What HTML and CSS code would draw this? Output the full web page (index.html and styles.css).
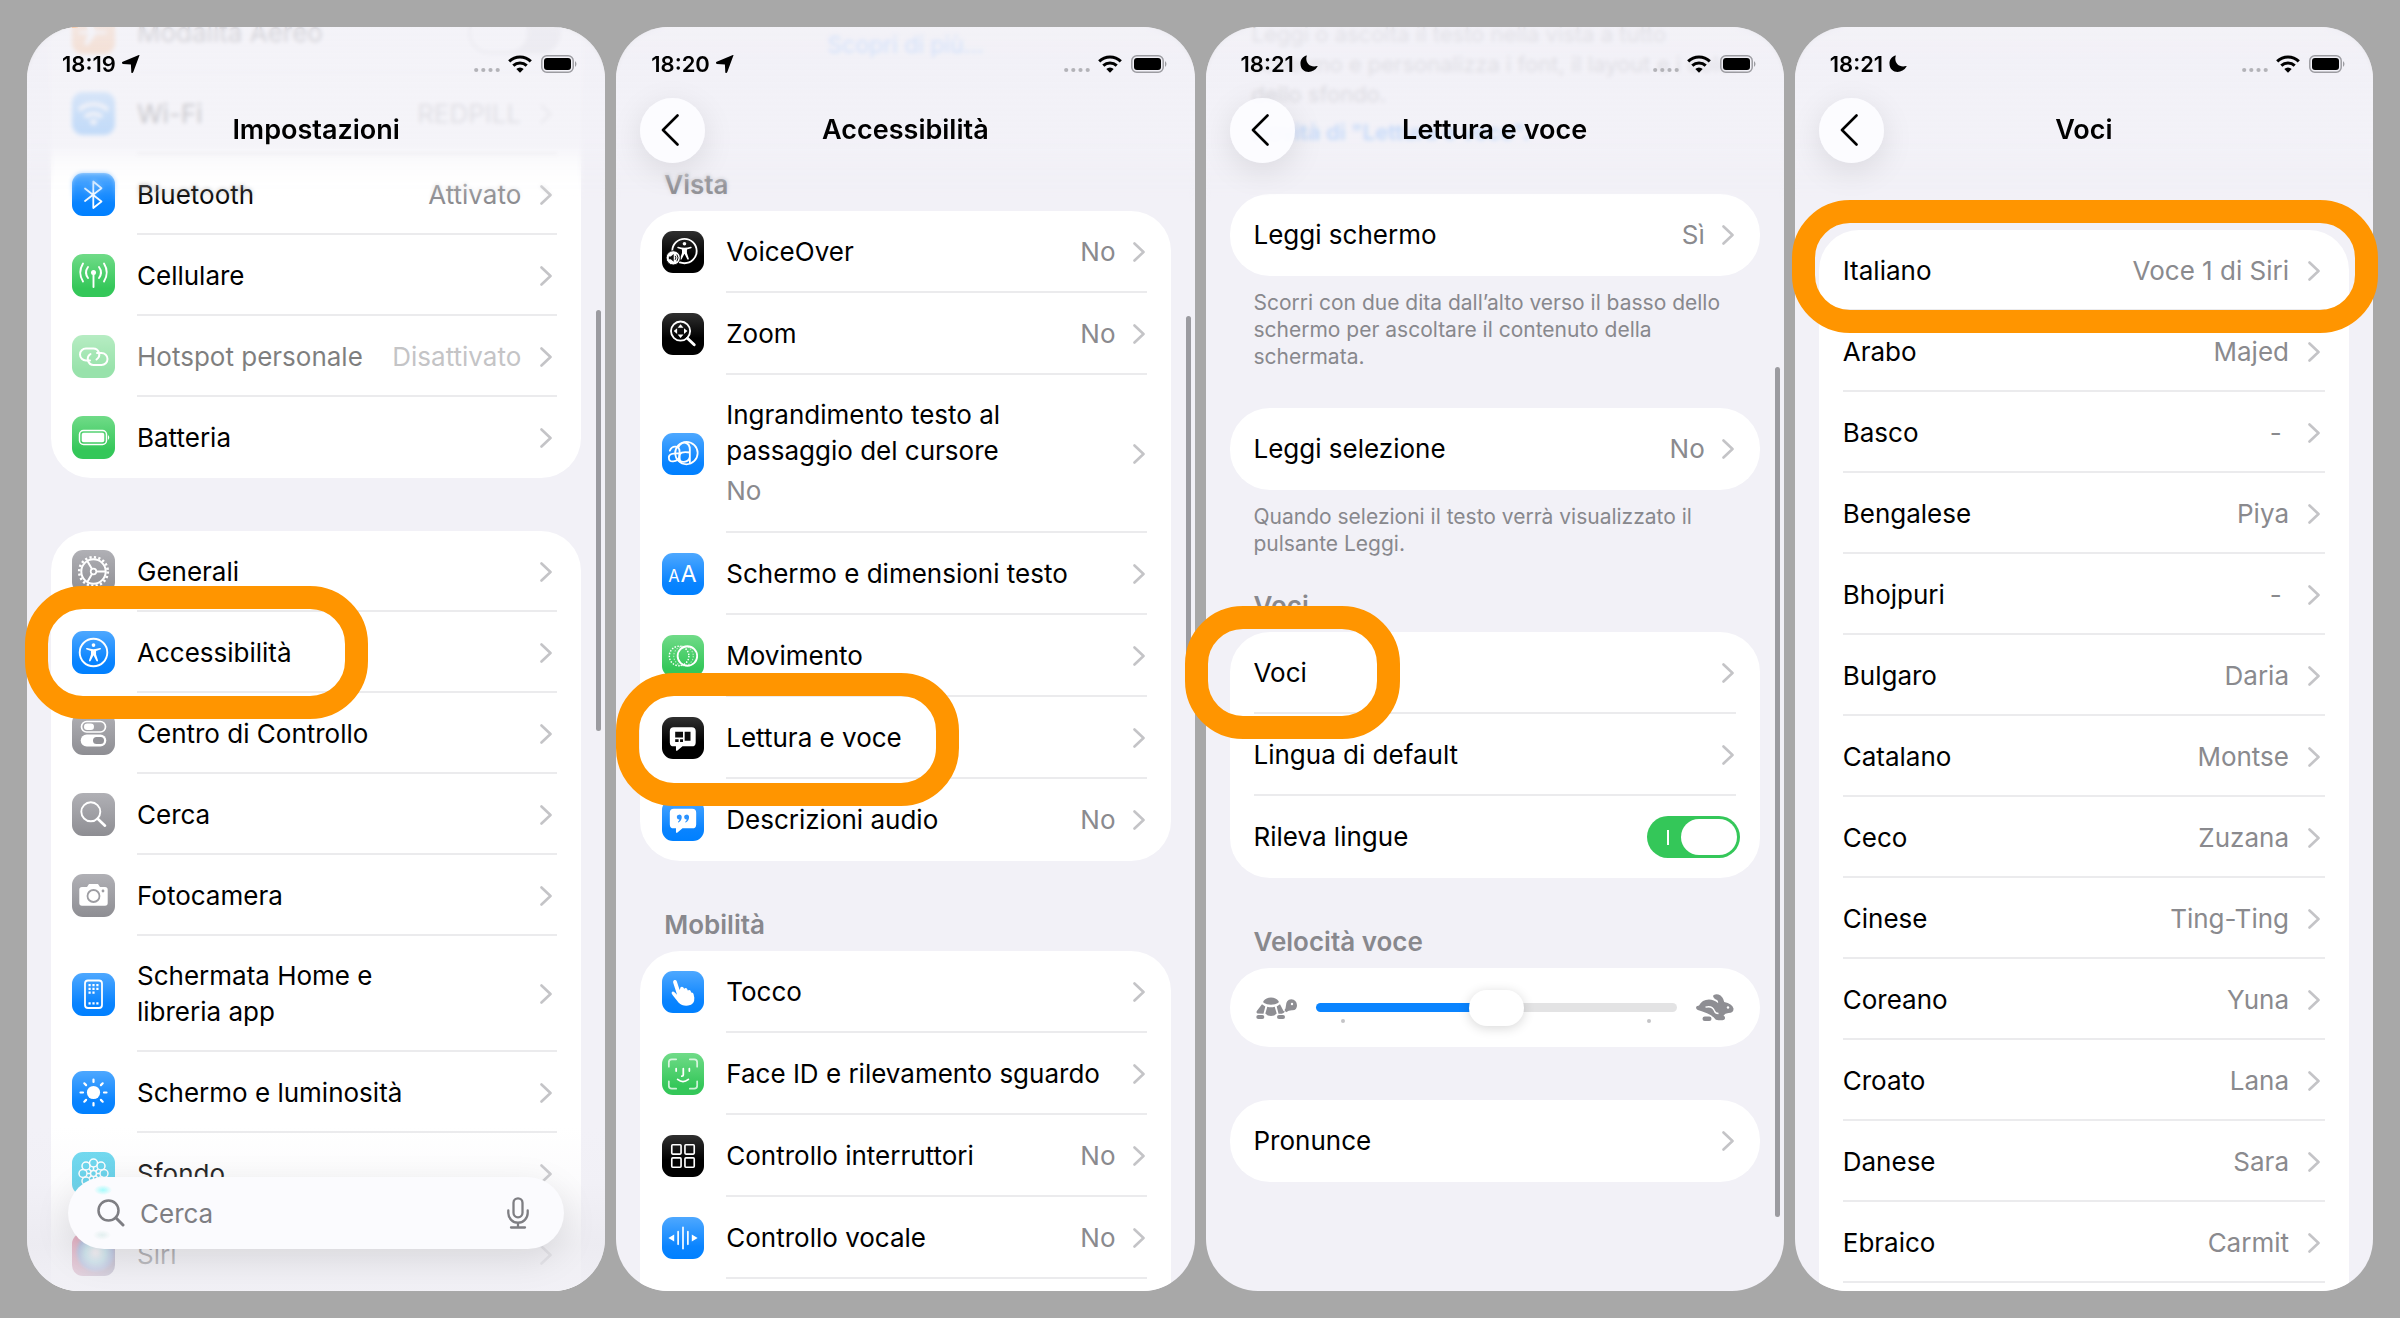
FILE: index.html
```html
<!DOCTYPE html>
<html lang="it">
<head>
    <meta charset="UTF-8">
    <meta name="viewport" content="width=device-width, initial-scale=1.0">
    <title>Impostazioni - Voci</title>
    <link rel="stylesheet" href="styles.css">
</head>
<body>
    <!-- Shared symbols -->
    <svg class="sprite" aria-hidden="true">
        <symbol id="chevron" viewBox="0 0 12 20"><path d="M1.5 1.5 10.5 10 1.5 18.5" fill="none" stroke="currentColor" stroke-width="2.6" stroke-linecap="round" stroke-linejoin="round"/></symbol>
        <symbol id="back" viewBox="0 0 18 32"><path d="M16.5 1.5 2 16 16.5 30.5" fill="none" stroke="currentColor" stroke-width="2.6" stroke-linecap="round" stroke-linejoin="round"/></symbol>
        <symbol id="location" viewBox="0 0 18 18"><path d="M17.5.3 11.300 17q-1.300 2.300-2 .2L8.900 9.600.9 8.900Q-1 8 .7 6.800L16.900.1q.9-.2.600.2z" fill="currentColor"/></symbol>
        <symbol id="moon" viewBox="0 0 19 19"><path d="M6.600.6q.8-.5.5.4C5 8 10.500 13.700 18 11.600q.9-.2.5.6C13.500 21 .5 19.500.5 9 .5 5 3 2 6.600.6z" fill="currentColor"/></symbol>
        <symbol id="dots" viewBox="0 0 26 18"><g fill="#b3b3b8"><circle cx="2.200" cy="15" r="2.100"/><circle cx="9.300" cy="15" r="2.100"/><circle cx="16.500" cy="15" r="2.100"/><circle cx="23.700" cy="15" r="2.100"/></g></symbol>
        <symbol id="wifi" viewBox="0 0 24 18"><g fill="none" stroke="currentColor" stroke-width="3"><path d="M1.200 6.400a15.500 15.500 0 0 1 21.600 0"/><path d="M5.300 10.600a9.700 9.700 0 0 1 13.400 0"/></g><path d="M12 17.800 8.300 14a5.300 5.300 0 0 1 7.400 0z" fill="currentColor"/></symbol>
        <symbol id="battery" viewBox="0 0 36 18"><rect x=".8" y=".8" width="31.400" height="16.400" rx="5" fill="none" stroke="#9c9ca1" stroke-width="1.500"/><rect x="3" y="3" width="27" height="12" rx="3" fill="currentColor"/><path d="M34 6q3 3 0 6z" fill="#9c9ca1"/></symbol>
        <symbol id="search" viewBox="0 0 28 28"><circle cx="11.500" cy="11.500" r="10" fill="none" stroke="currentColor" stroke-width="2.500"/><path d="M18.800 18.800 26 26" stroke="currentColor" stroke-width="3" stroke-linecap="round"/></symbol>
        <symbol id="mic" viewBox="0 0 22 32"><g fill="none" stroke="currentColor" stroke-width="2.300" stroke-linecap="round"><rect x="6.500" y="1.300" width="9" height="19" rx="4.500"/><path d="M1.300 13.500V16a9.700 9.700 0 0 0 19.400 0v-2.500M11 25.800V30M4 30.500h14"/></g></symbol>
        <symbol id="person" viewBox="0 0 20 24"><circle cx="10" cy="2.700" r="2.300"/><path d="M2 6.400q4 1.400 8 1.400t8-1.400q1.500-.2 1.300 1-.1.600-.8.900l-5.300 1.700v4.500l2.400 7.200q.2 1.300-.8 1.500-.9.100-1.300-.9L10 15.400l-3.500 6.900q-.4 1-1.300.9-1-.2-.8-1.500l2.400-7.200V10L1.500 8.300q-.7-.3-.8-.9-.2-1.200 1.300-1z"/></symbol>
    </svg>

    <main class="board">
        <!-- Impostazioni -->
        <section class="phone">
            <div class="screen">
                <header class="top-bar">
                    <div class="status">
                        <span class="time">18:19</span>
                        <svg class="status-mark"><use href="#location"/></svg>
                        <svg class="status-dots"><use href="#dots"/></svg>
                        <svg class="status-wifi"><use href="#wifi"/></svg>
                        <svg class="status-battery"><use href="#battery"/></svg>
                    </div>
                    <div class="nav"><h1>Impostazioni</h1></div>
                </header>

                <div class="content content-settings">
                    <ul class="card">
                        <li>
                            <label class="row row-switch">
                                <span class="icon orange"><svg viewBox="0 0 43 43"><path d="M7 20h9L12 9h4l8 11h9q4 1.500 0 3h-9l-8 11h-4l4-11H7z" fill="#fff"/></svg></span>
                                <span class="row-body"><span class="label">Modalità Aereo</span><input class="switch" type="checkbox" role="switch"></span>
                            </label>
                        </li>
                        <li>
                            <a class="row" href="#">
                                <span class="icon blue"><svg viewBox="0 0 43 43"><g fill="none" stroke="#fff" stroke-width="4"><path d="M7 18a21 21 0 0 1 29 0M13 25a12.500 12.500 0 0 1 17 0"/></g><path d="m21.500 34-4.500-5q4.500-3.500 9 0z" fill="#fff"/></svg></span>
                                <span class="row-body"><span class="label">Wi-Fi</span><span class="value">REDPILL</span><svg class="chevron"><use href="#chevron"/></svg></span>
                            </a>
                        </li>
                        <li>
                            <a class="row" href="#">
                                <span class="icon blue"><svg viewBox="0 0 43 43"><path d="M13 15.500 29.500 28.500 21.300 35V8.500l8.200 6.800L13 28" fill="none" stroke="#fff" stroke-width="1.800" stroke-linejoin="round" stroke-linecap="round"/></svg></span>
                                <span class="row-body"><span class="label">Bluetooth</span><span class="value">Attivato</span><svg class="chevron"><use href="#chevron"/></svg></span>
                            </a>
                        </li>
                        <li>
                            <a class="row" href="#">
                                <span class="icon green"><svg viewBox="0 0 43 43"><g fill="none" stroke="#fff" stroke-width="1.900" stroke-linecap="round"><path d="M11 9.500q-5.500 9 0 18M32 9.500q5.500 9 0 18M16 13q-4 5.500 0 11M27 13q4 5.500 0 11M21.500 18.500V33"/></g><circle cx="21.500" cy="18.500" r="2.500" fill="#fff"/></svg></span>
                                <span class="row-body"><span class="label">Cellulare</span><svg class="chevron"><use href="#chevron"/></svg></span>
                            </a>
                        </li>
                        <li>
                            <a class="row row-disabled" href="#">
                                <span class="icon green"><svg viewBox="0 0 43 43"><g fill="none" stroke="#fff" stroke-width="2" stroke-linecap="round"><path d="M18 25.500h-4a6 6 0 0 1 0-12h7a6 6 0 0 1 3.500 11"/><path d="M25 18h4.500a6 6 0 0 1 0 12H22a6 6 0 0 1-3.500-11"/></g></svg></span>
                                <span class="row-body"><span class="label">Hotspot personale</span><span class="value">Disattivato</span><svg class="chevron"><use href="#chevron"/></svg></span>
                            </a>
                        </li>
                        <li>
                            <a class="row" href="#">
                                <span class="icon green"><svg viewBox="0 0 43 43"><rect x="7.500" y="14.500" width="27" height="14" rx="4" fill="none" stroke="#fff" stroke-width="1.500"/><rect x="9.700" y="16.700" width="22.600" height="9.600" rx="2" fill="#fff"/><path d="M36 19q2.500 2.500 0 5z" fill="#fff"/></svg></span>
                                <span class="row-body"><span class="label">Batteria</span><svg class="chevron"><use href="#chevron"/></svg></span>
                            </a>
                        </li>
                    </ul>

                    <ul class="card card-cut">
                        <li>
                            <a class="row" href="#">
                                <span class="icon grey"><svg viewBox="0 0 43 43"><g fill="none" stroke="#fff"><circle cx="21.500" cy="21.500" r="14.300" stroke-width="2.600" stroke-dasharray="2.200 2.290"/><circle cx="21.500" cy="21.500" r="12.200" stroke-width="2"/><circle cx="21.500" cy="21.500" r="2.800" stroke-width="1.700"/><path d="M24.300 21.500h9.500M20 19 15.300 11M20 24l-4.700 8" stroke-width="2"/></g></svg></span>
                                <span class="row-body"><span class="label">Generali</span><svg class="chevron"><use href="#chevron"/></svg></span>
                            </a>
                        </li>
                        <li>
                            <a class="row" href="#">
                                <span class="icon blue"><svg viewBox="0 0 43 43"><circle cx="21.500" cy="21.500" r="13.800" fill="none" stroke="#fff" stroke-width="1.900"/><svg x="13.500" y="11.500" width="16" height="20" fill="#fff"><use href="#person"/></svg></svg></span>
                                <span class="row-body"><span class="label">Accessibilità</span><svg class="chevron"><use href="#chevron"/></svg></span>
                            </a>
                        </li>
                        <li>
                            <a class="row" href="#">
                                <span class="icon grey"><svg viewBox="0 0 43 43"><rect x="9.500" y="9.500" width="24" height="10.500" rx="5.200" fill="none" stroke="#fff" stroke-width="1.700"/><rect x="12" y="11.500" width="10" height="6.500" rx="3.200" fill="#fff"/><rect x="8.700" y="22.500" width="25.600" height="12" rx="6" fill="#fff"/><rect x="21" y="25" width="11" height="7" rx="3.500" fill="#929297"/></svg></span>
                                <span class="row-body"><span class="label">Centro di Controllo</span><svg class="chevron"><use href="#chevron"/></svg></span>
                            </a>
                        </li>
                        <li>
                            <a class="row" href="#">
                                <span class="icon grey"><svg viewBox="0 0 43 43"><circle cx="18.800" cy="18.800" r="9.500" fill="none" stroke="#fff" stroke-width="1.900"/><path d="m25.700 25.700 7.300 7" stroke="#fff" stroke-width="2.600" stroke-linecap="round"/></svg></span>
                                <span class="row-body"><span class="label">Cerca</span><svg class="chevron"><use href="#chevron"/></svg></span>
                            </a>
                        </li>
                        <li>
                            <a class="row" href="#">
                                <span class="icon grey"><svg viewBox="0 0 43 43"><path d="M10 13h5l2-3h9l2 3h5q2.700 0 2.700 2.700V29q0 2.700-2.700 2.700H10Q7.300 31.700 7.300 29V15.700Q7.300 13 10 13z" fill="#fff"/><circle cx="21.500" cy="22" r="6" fill="none" stroke="#9d9da2" stroke-width="1.800"/><circle cx="31" cy="17" r="1.400" fill="#9d9da2"/></svg></span>
                                <span class="row-body"><span class="label">Fotocamera</span><svg class="chevron"><use href="#chevron"/></svg></span>
                            </a>
                        </li>
                        <li>
                            <a class="row" href="#">
                                <span class="icon blue"><svg viewBox="0 0 43 43"><rect x="13" y="7.500" width="17" height="27.500" rx="3" fill="none" stroke="#fff" stroke-width="1.800"/><g fill="#fff"><path d="M16.500 11h2.200v2.200h-2.200zM20.400 11h2.200v2.200h-2.200zM24.300 11h2.200v2.200h-2.200zM16.500 14.800h2.200V17h-2.200zM20.400 14.800h2.200V17h-2.200zM24.300 14.800h2.200V17h-2.200zM16.500 18.600h2.200v2.200h-2.200zM20.400 18.600h2.200v2.200h-2.200zM16.500 29.300h2.200v2.200h-2.200zM20.400 29.300h2.200v2.200h-2.200zM24.300 29.300h2.200v2.200h-2.200z"/></g></svg></span>
                                <span class="row-body"><span class="label label-narrow">Schermata Home e libreria app</span><svg class="chevron"><use href="#chevron"/></svg></span>
                            </a>
                        </li>
                        <li>
                            <a class="row" href="#">
                                <span class="icon blue"><svg viewBox="0 0 43 43"><circle cx="21.500" cy="21.500" r="6.600" fill="#fff"/><path d="M21.500 8.500V11M21.500 32v2.500M8.500 21.500H11M32 21.500h2.500M12.300 12.300l1.800 1.800M28.900 28.900l1.800 1.800M12.300 30.700l1.800-1.800M28.900 14.100l1.800-1.800" stroke="#fff" stroke-width="2.200" stroke-linecap="round"/></svg></span>
                                <span class="row-body"><span class="label">Schermo e luminosità</span><svg class="chevron"><use href="#chevron"/></svg></span>
                            </a>
                        </li>
                        <li>
                            <a class="row" href="#">
                                <span class="icon cyan"><svg viewBox="0 0 43 43"><g fill="none" stroke="#fff" stroke-width="1.500"><circle cx="21.500" cy="11" r="4"/><circle cx="29" cy="14" r="4"/><circle cx="32" cy="21.500" r="4"/><circle cx="29" cy="29" r="4"/><circle cx="21.500" cy="32" r="4"/><circle cx="14" cy="29" r="4"/><circle cx="11" cy="21.500" r="4"/><circle cx="14" cy="14" r="4"/><circle cx="21.500" cy="21.500" r="3"/><path d="M21.500 15v3.500M21.500 24.500V28M15 21.500h3.500M24.500 21.500H28M17 17l2.400 2.400M23.600 23.600 26 26M17 26l2.400-2.400M23.600 19.400 26 17"/></g></svg></span>
                                <span class="row-body"><span class="label">Sfondo</span><svg class="chevron"><use href="#chevron"/></svg></span>
                            </a>
                        </li>
                        <li>
                            <a class="row" href="#">
                                <span class="icon siri"></span>
                                <span class="row-body"><span class="label">Siri</span><svg class="chevron"><use href="#chevron"/></svg></span>
                            </a>
                        </li>
                    </ul>
                </div>

                <span class="scrollbar scrollbar-settings"></span>
                <form class="search-area">
                    <label class="search">
                        <svg class="search-icon"><use href="#search"/></svg>
                        <input type="search" placeholder="Cerca" aria-label="Cerca">
                        <svg class="mic-icon"><use href="#mic"/></svg>
                    </label>
                </form>
            </div>
            <span class="ring ring-settings"></span>
        </section>

        <!-- Accessibilità -->
        <section class="phone">
            <div class="screen">
                <header class="top-bar">
                    <div class="status">
                        <span class="time">18:20</span>
                        <svg class="status-mark"><use href="#location"/></svg>
                        <svg class="status-dots"><use href="#dots"/></svg>
                        <svg class="status-wifi"><use href="#wifi"/></svg>
                        <svg class="status-battery"><use href="#battery"/></svg>
                    </div>
                    <div class="nav">
                        <button class="back" aria-label="Indietro"><svg><use href="#back"/></svg></button>
                        <h1>Accessibilità</h1>
                    </div>
                </header>

                <div class="content content-access">
                    <a class="more" href="#">Scopri di più...</a>
                    <h2>Vista</h2>
                    <ul class="card">
                        <li>
                            <a class="row" href="#">
                                <span class="icon black"><svg viewBox="0 0 43 43"><circle cx="23" cy="20.500" r="12.500" fill="none" stroke="#fff" stroke-width="1.900"/><svg x="15" y="11" width="16" height="19" fill="#fff"><use href="#person"/></svg><circle cx="11.500" cy="27.500" r="7.300" fill="#fff" stroke="#111" stroke-width="1"/><path d="M7 26v3h2l3 2.500v-8L9 26z" fill="#111"/><path d="M13.500 25.500q1.500 2 0 4M15.200 24q2.500 3.500 0 7" fill="none" stroke="#111"/></svg></span>
                                <span class="row-body"><span class="label">VoiceOver</span><span class="value">No</span><svg class="chevron"><use href="#chevron"/></svg></span>
                            </a>
                        </li>
                        <li>
                            <a class="row" href="#">
                                <span class="icon black"><svg viewBox="0 0 43 43"><circle cx="19" cy="18.500" r="9.800" fill="none" stroke="#fff" stroke-width="1.900"/><path d="m26 25.800 7 6.700" stroke="#fff" stroke-width="3" stroke-linecap="round"/><path d="m19 11.500 3 3.500h-6zM19 25.500l-3-3.500h6zM12 18.500l3.500-3v6zM26 18.500l-3.500 3v-6z" fill="#fff"/></svg></span>
                                <span class="row-body"><span class="label">Zoom</span><span class="value">No</span><svg class="chevron"><use href="#chevron"/></svg></span>
                            </a>
                        </li>
                        <li>
                            <a class="row" href="#">
                                <span class="icon blue"><svg viewBox="0 0 43 43"><circle cx="25" cy="20.500" r="11.500" fill="none" stroke="#fff" stroke-width="1.800"/><g fill="none" stroke="#fff" stroke-width="1.900" stroke-linecap="round"><path d="M8 18q2-4.500 6-4 4 .5 4 5v10M18 21q-11-1-11 4 0 4.500 4.500 4 5-.5 6.500-4.500"/><path d="M17 14q3-5 7-4 4.500 1 4.500 7v13M28.500 20q-11-2-11 4.500 0 5.500 5 5 5-.5 6-5"/></g></svg></span>
                                <span class="row-body"><span class="label label-narrow">Ingrandimento testo al passaggio del cursore <span class="sub">No</span></span><svg class="chevron"><use href="#chevron"/></svg></span>
                            </a>
                        </li>
                        <li>
                            <a class="row" href="#">
                                <span class="icon blue"><svg viewBox="0 0 43 43"><text x="6.500" y="30" font-size="17" fill="#fff">A</text><text x="19" y="30" font-size="24" fill="#fff">A</text></svg></span>
                                <span class="row-body"><span class="label">Schermo e dimensioni testo</span><svg class="chevron"><use href="#chevron"/></svg></span>
                            </a>
                        </li>
                        <li>
                            <a class="row" href="#">
                                <span class="icon green"><svg viewBox="0 0 43 43"><g fill="none" stroke="#fff"><circle cx="17.500" cy="21.500" r="10" stroke-width="1.500" stroke-dasharray="1.500 1.500"/><circle cx="22" cy="21.500" r="10" stroke-width="1.200" stroke-dasharray="1.500 1.500" opacity=".6"/><circle cx="26" cy="21.500" r="10" stroke-width="1.900"/></g></svg></span>
                                <span class="row-body"><span class="label">Movimento</span><svg class="chevron"><use href="#chevron"/></svg></span>
                            </a>
                        </li>
                        <li>
                            <a class="row" href="#">
                                <span class="icon black"><svg viewBox="0 0 43 43"><path d="M12 10.500h18.500q4 0 4 4V26q0 4-4 4H21l-5.500 4.500q-1.200.6-1.200-.8V30H12q-4 0-4-4V14.500q0-4 4-4z" fill="#fff"/><path d="M13.500 15h8v6h-8zM13.500 22.700h3.500v3h-3.500zM18.500 22.700h3v3h-3zM23.200 15h6v9.200h-6z" fill="#0c0c0c"/></svg></span>
                                <span class="row-body"><span class="label">Lettura e voce</span><svg class="chevron"><use href="#chevron"/></svg></span>
                            </a>
                        </li>
                        <li>
                            <a class="row" href="#">
                                <span class="icon blue"><svg viewBox="0 0 43 43"><path d="M12 10h19q4 0 4 4v12q0 4-4 4H21l-5.500 4.500q-1.200.6-1.200-.8V30H12q-4 0-4-4V14q0-4 4-4z" fill="#fff"/><g fill="#2b93ff"><path d="M17.500 16a2.500 2.500 0 0 1 2.700 2.800q0 3.500-3.400 5.200-.8 0-.5-.8 1.300-1 1.600-2.200a2.500 2.500 0 0 1-.4-5zM25 16a2.500 2.500 0 0 1 2.700 2.800q0 3.500-3.400 5.200-.8 0-.5-.8 1.300-1 1.600-2.200a2.500 2.500 0 0 1-.4-5z"/></g></svg></span>
                                <span class="row-body"><span class="label">Descrizioni audio</span><span class="value">No</span><svg class="chevron"><use href="#chevron"/></svg></span>
                            </a>
                        </li>
                    </ul>

                    <h2>Mobilità</h2>
                    <ul class="card card-cut">
                        <li>
                            <a class="row" href="#">
                                <span class="icon blue"><svg viewBox="0 0 43 43"><path d="M12.600 9.300q1.800-.6 2.500 1.200l3 9 .9-2.800q1.500-1.500 2.900.3l.8 1.200q1.900-1.800 3.200.4l.5 1.300q2-1.300 3 .6l.4 1.500q2-.5 2.500 1.500l.8 3.800q.5 7-6.300 8.100-6 .8-9.700-3l-6.300-7.800q-1.600-2.300-.7-3.200 1.300-1.200 3 .6l2.300 2.300-4-12.500q-.4-1.900 1.200-2.500z" fill="#fff"/></svg></span>
                                <span class="row-body"><span class="label">Tocco</span><svg class="chevron"><use href="#chevron"/></svg></span>
                            </a>
                        </li>
                        <li>
                            <a class="row" href="#">
                                <span class="icon green"><svg viewBox="0 0 43 43"><g fill="none" stroke="#fff" stroke-width="1.800" stroke-linecap="round"><path d="M7 14V9.500Q7 6.500 10 6.500h4.500M28.500 6.500H33q3 0 3 3V14M36 29v4.500q0 3-3 3h-4.500M14.500 36.500H10q-3 0-3-3V29" opacity=".75"/><path d="M14.500 16v2.500M28 16v2.500M21.800 16v6.500q0 1.200-1.500 1.200M16 27q5.500 4.500 11 0"/></g></svg></span>
                                <span class="row-body"><span class="label">Face ID e rilevamento sguardo</span><svg class="chevron"><use href="#chevron"/></svg></span>
                            </a>
                        </li>
                        <li>
                            <a class="row" href="#">
                                <span class="icon black"><svg viewBox="0 0 43 43"><g fill="none" stroke="#fff" stroke-width="1.700"><rect x="10" y="10" width="9.500" height="9.500" rx="1"/><rect x="23.500" y="10" width="9.500" height="9.500" rx="1"/><rect x="10" y="23.500" width="9.500" height="9.500" rx="1"/><rect x="23.500" y="23.500" width="9.500" height="9.500" rx="1"/></g></svg></span>
                                <span class="row-body"><span class="label">Controllo interruttori</span><span class="value">No</span><svg class="chevron"><use href="#chevron"/></svg></span>
                            </a>
                        </li>
                        <li>
                            <a class="row" href="#">
                                <span class="icon blue"><svg viewBox="0 0 43 43"><path d="M6.500 21.500 12.500 18v7zM36.500 21.500l-6-3.500v7z" fill="#fff"/><path d="M16.500 15v13M21.500 10.500v22M26.500 15v13" stroke="#fff" stroke-width="1.700" stroke-linecap="round"/></svg></span>
                                <span class="row-body"><span class="label">Controllo vocale</span><span class="value">No</span><svg class="chevron"><use href="#chevron"/></svg></span>
                            </a>
                        </li>
                    </ul>
                </div>
                <span class="scrollbar scrollbar-access"></span>
            </div>
            <span class="ring ring-access"></span>
        </section>

        <!-- Lettura e voce -->
        <section class="phone">
            <div class="screen">
                <header class="top-bar">
                    <div class="status">
                        <span class="time">18:21</span>
                        <svg class="status-mark"><use href="#moon"/></svg>
                        <svg class="status-dots"><use href="#dots"/></svg>
                        <svg class="status-wifi"><use href="#wifi"/></svg>
                        <svg class="status-battery"><use href="#battery"/></svg>
                    </div>
                    <div class="nav">
                        <button class="back" aria-label="Indietro"><svg><use href="#back"/></svg></button>
                        <h1>Lettura e voce</h1>
                    </div>
                </header>

                <div class="content content-speech">
                    <div class="intro">
                        <p>Leggi o ascolta il testo nella vista a tutto schermo e personalizza i font, il layout e i colori dello sfondo.</p>
                        <a href="#">Novità di "Lettura e voce".</a>
                    </div>
                    <ul class="card">
                        <li><a class="row" href="#"><span class="row-body"><span class="label">Leggi schermo</span><span class="value">Sì</span><svg class="chevron"><use href="#chevron"/></svg></span></a></li>
                    </ul>
                    <p class="note">Scorri con due dita dall’alto verso il basso dello schermo per ascoltare il contenuto della schermata.</p>
                    <ul class="card">
                        <li><a class="row" href="#"><span class="row-body"><span class="label">Leggi selezione</span><span class="value">No</span><svg class="chevron"><use href="#chevron"/></svg></span></a></li>
                    </ul>
                    <p class="note">Quando selezioni il testo verrà visualizzato il pulsante Leggi.</p>
                    <h2 class="after-note">Voci</h2>
                    <ul class="card">
                        <li><a class="row" href="#"><span class="row-body"><span class="label">Voci</span><svg class="chevron"><use href="#chevron"/></svg></span></a></li>
                        <li><a class="row" href="#"><span class="row-body"><span class="label">Lingua di default</span><svg class="chevron"><use href="#chevron"/></svg></span></a></li>
                        <li><label class="row row-switch"><span class="row-body"><span class="label">Rileva lingue</span><input class="switch" type="checkbox" role="switch" checked></span></label></li>
                    </ul>
                    <h2 id="speed-title">Velocità voce</h2>
                    <div class="card speed">
                        <svg class="turtle" viewBox="0 0 41 22"><g fill="#8e8e93"><path d="M7.500 4Q10 .5 15 .5T22.500 4q.7 1.200-.5 2-2.500 1.700-7 1.700T8 6q-1.200-.8-.5-2z"/><path d="M6 7.300 9.300 9.500 7.500 16.800 1.500 16.500Q0 16 .8 14zM11.300 9.800q3.700 1 7.400 0l2 6.700q-2.200 2.500-5.700 2.500t-5.700-2.500zM24 7.300 20.700 9.500l1.800 7.300q3 .3 5-.8L29 14.500l-1.500-.5z"/><rect x=".3" y="18" width="8" height="4" rx="2"/><rect x="21" y="18" width="8" height="4" rx="2"/><path d="M29.800 9.500q0-7 5.500-7.300 5.300.3 5.700 6 0 5-4.500 5-3.500-.2-6.500 2L28.500 13q1.300-1.300 1.300-3.500z"/></g><circle cx="36" cy="7" r="1.200" fill="#fff"/></svg>
                        <div class="slider">
                            <input type="range" min="0" max="100" value="50" aria-labelledby="speed-title">
                            <span class="tick tick-start"></span>
                            <span class="tick tick-end"></span>
                        </div>
                        <svg class="rabbit" viewBox="0 0 38 27"><path d="M17 1.700Q18.500-.5 22.500.5q4.500 1.500 5.700 7.500 8 1.500 9.300 6.500.3 4.500-5 4.500-3.500 0-5 2.500 1.800 1 1.500 3-.4 1.700-2.500 1.700h-4q-3 0-4.500-2.500-2.500-3-7-4.500Q5 17 1.800 16-1 14 .7 12.300L3 11.500Q6 5.500 13 5.500q5 0 9 3.500.6-1.500-1-3-3.700-1.500-4-4.300z" fill="#8e8e93"/><path d="M9.500 13.200q7-1.800 9 3.800.6 2.500 4 2.500" fill="none" stroke="#fff" stroke-width="1.300"/><rect x="6.500" y="22.500" width="9" height="4.500" rx="2.200" fill="#8e8e93"/><circle cx="32" cy="13.500" r="1.200" fill="#fff"/></svg>
                    </div>
                    <ul class="card card-apart">
                        <li><a class="row" href="#"><span class="row-body"><span class="label">Pronunce</span><svg class="chevron"><use href="#chevron"/></svg></span></a></li>
                    </ul>
                </div>
                <span class="scrollbar scrollbar-speech"></span>
            </div>
            <span class="ring ring-speech"></span>
        </section>

        <!-- Voci -->
        <section class="phone">
            <div class="screen">
                <header class="top-bar">
                    <div class="status">
                        <span class="time">18:21</span>
                        <svg class="status-mark"><use href="#moon"/></svg>
                        <svg class="status-dots"><use href="#dots"/></svg>
                        <svg class="status-wifi"><use href="#wifi"/></svg>
                        <svg class="status-battery"><use href="#battery"/></svg>
                    </div>
                    <div class="nav">
                        <button class="back" aria-label="Indietro"><svg><use href="#back"/></svg></button>
                        <h1>Voci</h1>
                    </div>
                </header>

                <div class="content content-voices">
                    <ul class="card card-cut">
                        <li><a class="row" href="#"><span class="row-body"><span class="label">Italiano</span><span class="value">Voce 1 di Siri</span><svg class="chevron"><use href="#chevron"/></svg></span></a></li>
                        <li><a class="row" href="#"><span class="row-body"><span class="label">Arabo</span><span class="value">Majed</span><svg class="chevron"><use href="#chevron"/></svg></span></a></li>
                        <li><a class="row" href="#"><span class="row-body"><span class="label">Basco</span><span class="value">-&nbsp;</span><svg class="chevron"><use href="#chevron"/></svg></span></a></li>
                        <li><a class="row" href="#"><span class="row-body"><span class="label">Bengalese</span><span class="value">Piya</span><svg class="chevron"><use href="#chevron"/></svg></span></a></li>
                        <li><a class="row" href="#"><span class="row-body"><span class="label">Bhojpuri</span><span class="value">-&nbsp;</span><svg class="chevron"><use href="#chevron"/></svg></span></a></li>
                        <li><a class="row" href="#"><span class="row-body"><span class="label">Bulgaro</span><span class="value">Daria</span><svg class="chevron"><use href="#chevron"/></svg></span></a></li>
                        <li><a class="row" href="#"><span class="row-body"><span class="label">Catalano</span><span class="value">Montse</span><svg class="chevron"><use href="#chevron"/></svg></span></a></li>
                        <li><a class="row" href="#"><span class="row-body"><span class="label">Ceco</span><span class="value">Zuzana</span><svg class="chevron"><use href="#chevron"/></svg></span></a></li>
                        <li><a class="row" href="#"><span class="row-body"><span class="label">Cinese</span><span class="value">Ting-Ting</span><svg class="chevron"><use href="#chevron"/></svg></span></a></li>
                        <li><a class="row" href="#"><span class="row-body"><span class="label">Coreano</span><span class="value">Yuna</span><svg class="chevron"><use href="#chevron"/></svg></span></a></li>
                        <li><a class="row" href="#"><span class="row-body"><span class="label">Croato</span><span class="value">Lana</span><svg class="chevron"><use href="#chevron"/></svg></span></a></li>
                        <li><a class="row" href="#"><span class="row-body"><span class="label">Danese</span><span class="value">Sara</span><svg class="chevron"><use href="#chevron"/></svg></span></a></li>
                        <li><a class="row" href="#"><span class="row-body"><span class="label">Ebraico</span><span class="value">Carmit</span><svg class="chevron"><use href="#chevron"/></svg></span></a></li>
                    </ul>
                </div>
            </div>
            <span class="ring ring-voices"></span>
        </section>
    </main>
</body>
</html>
```

FILE: styles.css
```css
* {
    box-sizing: border-box;
}

body {
    margin: 0;
    background-color: #a8a8a8;
    color: #000;
    font-family: Inter, "Liberation Sans", sans-serif;
    font-size: 26px;
    line-height: 36px;
}

ul {
    margin: 0;
    padding: 0;
    list-style: none;
}

a {
    color: inherit;
    text-decoration: none;
}

svg {
    display: block;
}

.sprite {
    display: none;
}

.board {
    display: grid;
    grid-template-columns: repeat(4, 1fr);
    gap: 11px;
    height: 100vh;
    padding: 27px;
}

.phone {
    position: relative;
    min-width: 0;
    min-height: 0;
}

.screen {
    position: relative;
    height: 100%;
    overflow: hidden;
    border-radius: 52px;
    background-color: #f2f1f7;
}

/* Status bar and title, lying over the scrolled list */
.top-bar {
    position: absolute;
    top: 0;
    left: 0;
    right: 0;
    z-index: 2;
    padding: 24px 24px 50px;
}

.top-bar::before {
    content: "";
    position: absolute;
    inset: 0;
    z-index: -1;
    background: linear-gradient(rgba(242, 241, 247, 0.88) 0%, rgba(242, 241, 247, 0.8) 62%, rgba(242, 241, 247, 0) 100%);
    backdrop-filter: blur(2px);
    mask-image: linear-gradient(#000 65%, transparent 95%);
}

.status {
    display: flex;
    align-items: center;
    height: 26px;
    padding: 0 4px 0 11px;
}

.time {
    font-size: 22px;
    font-weight: 600;
    line-height: 26px;
}

.status-mark {
    width: 18px;
    height: 18px;
    margin: 0 auto 0 6px;
}

.status-dots {
    width: 26px;
    height: 18px;
}

.status-wifi {
    width: 24px;
    height: 18px;
    margin: 0 9px 0 8px;
}

.status-battery {
    width: 36px;
    height: 18px;
}

.nav {
    display: grid;
    grid-template-columns: 65px 1fr 65px;
    align-items: center;
    min-height: 66px;
    margin-top: 20px;
}

.nav h1 {
    grid-column: 2;
    margin: 0;
    font-size: 27px;
    font-weight: 600;
    text-align: center;
}

.back {
    display: flex;
    justify-content: center;
    align-items: center;
    width: 65px;
    height: 65px;
    padding: 0 5px 0 0;
    border: none;
    border-radius: 50%;
    background-color: rgba(252, 252, 255, 0.95);
    box-shadow: 0 8px 32px rgba(0, 0, 0, 0.1);
    color: #000;
    cursor: pointer;
}

.back svg {
    width: 18px;
    height: 32px;
}

/* Scrolled content */
.content {
    --row-height: 82px;
    --row-end: 2px;
    --value-gap: 17px;
    padding: 0 24px;
}

.content-settings,
.content-voices {
    --row-height: 81px;
    --row-end: 5px;
    --value-gap: 19px;
}

.content-settings {
    margin-top: -35px;
}

.content-speech {
    margin-top: -8px;
}

.content-voices {
    padding-top: 203px;
}

.card {
    overflow: hidden;
    border-radius: 40px;
    background-color: #fff;
}

.card-cut {
    padding-bottom: 40px;
    border-bottom-left-radius: 0;
    border-bottom-right-radius: 0;
}

.content-settings .card-cut,
.card-apart {
    margin-top: 53px;
}

h2 {
    margin: 0;
    padding: 46px 24px 8px;
    color: #88888d;
    font-size: 26px;
    font-weight: 600;
}

h2.after-note {
    padding-top: 31px;
}

.more {
    display: block;
    margin-bottom: 58px;
    color: #0a7aff;
    font-size: 23px;
    text-align: center;
}

.intro {
    height: 175px;
    padding: 0 10px 0 22px;
    color: #6c6c70;
    font-size: 22px;
    line-height: 30px;
}

.intro p {
    margin: 0 0 8px;
}

.intro a {
    color: #0a7aff;
    font-weight: 600;
}

.note {
    margin: 13px 24px 38px;
    color: #88888d;
    font-size: 21px;
    line-height: 27px;
}

.note:has(+ h2) {
    margin-bottom: 0;
}

.row {
    display: flex;
    align-items: stretch;
    padding: 0 24px;
}

.row:has(.icon) {
    padding-left: 21px;
}

.icon {
    flex: none;
    align-self: center;
    width: 43px;
    height: 43px;
    margin-right: 22px;
    overflow: hidden;
    border-radius: 11px;
}

.content-access .row {
    padding-left: 22px;
}

.content-access .icon {
    width: 42px;
    height: 42px;
}

.row-body {
    display: flex;
    flex: 1;
    align-items: center;
    min-width: 0;
    min-height: var(--row-height);
    padding: 22px var(--row-end) 20px 0;
    border-bottom: 2px solid #ebebed;
}

.card:not(.card-cut) li:last-child .row-body {
    border-bottom-color: transparent;
}

.label {
    flex: 1;
    white-space: nowrap;
}

.label-narrow {
    flex: 0 1 300px;
    margin-right: auto;
    white-space: normal;
}

.sub {
    display: block;
    margin: 4px 0 2px;
    color: #8a8a8e;
}

.value {
    color: #8a8a8e;
    white-space: nowrap;
}

.chevron {
    flex: none;
    width: 12px;
    height: 20px;
    margin-left: var(--value-gap);
    color: #c4c4c7;
}

.row-disabled .icon,
.row-disabled .label,
.row-disabled .value {
    opacity: 0.5;
}

.blue {
    background: linear-gradient(#4ea8ff, #0a84ff 70%, #0080ff);
}

.green {
    background: linear-gradient(#70db88, #34c759 80%);
}

.grey {
    background: linear-gradient(#b0b0b5, #8e8e93);
}

.black {
    background: linear-gradient(#303030, #000 60%);
}

.orange {
    background: linear-gradient(#ffa050, #ff7a10);
}

.cyan {
    background: linear-gradient(#66d6ee, #3cc8e6);
}

.siri {
    background: radial-gradient(circle at 55% 45%, #fff 5%, #7fd8e8 30%, #4a70c0 50%, transparent 62%), linear-gradient(110deg, #e0406a, #3a3a6a);
}

/* Switch */
.switch {
    flex: none;
    appearance: none;
    display: flex;
    align-items: center;
    width: 93px;
    height: 42px;
    margin: 0;
    padding: 3px;
    border-radius: 21px;
    background-color: #c9c9ce;
}

.switch::before {
    content: "";
    width: 56px;
    height: 36px;
    border-radius: 18px;
    background-color: #fff;
}

.switch:checked {
    justify-content: flex-end;
    background: linear-gradient(#fff, #fff) 20px center / 2px 15px no-repeat #34c759;
}

.row-switch {
    padding-right: 20px;
}

.row-switch .row-body {
    padding: 2px 0 0;
}

/* Speech rate */
.speed {
    display: flex;
    align-items: center;
    gap: 19px;
    height: 79px;
    padding: 0 26px;
}

.turtle {
    flex: none;
    width: 41px;
    height: 22px;
}

.rabbit {
    flex: none;
    width: 38px;
    height: 27px;
}

.slider {
    position: relative;
    display: flex;
    flex: 1;
    align-items: center;
    height: 40px;
}

.slider input {
    appearance: none;
    width: 100%;
    height: 9px;
    margin: 0;
    border-radius: 5px;
    background: linear-gradient(to right, #0a84ff 50%, #e3e3e4 50%);
}

.slider input::-webkit-slider-thumb {
    appearance: none;
    width: 55px;
    height: 36px;
    border-radius: 18px;
    background-color: #fff;
    box-shadow: 0 2px 12px rgba(0, 0, 0, 0.16);
}

.tick {
    position: absolute;
    bottom: 5px;
    width: 4px;
    height: 4px;
    border-radius: 50%;
    background-color: #c4c4c7;
}

.tick-start {
    left: 7%;
}

.tick-end {
    right: 7%;
}

/* Search field floating over the end of the list */
.search-area {
    position: absolute;
    left: 0;
    right: 0;
    bottom: 0;
    z-index: 2;
    padding: 50px 41px 42px;
    background: linear-gradient(rgba(240, 239, 245, 0) 0%, rgba(238, 237, 243, 0.2) 32%, rgba(234, 233, 239, 0.72) 72%, rgba(240, 239, 245, 0.9) 100%);
}

.search {
    display: flex;
    align-items: center;
    height: 72px;
    padding: 0 35px 0 29px;
    border-radius: 36px;
    background: radial-gradient(9px 5px at 35px 13px, #a5fbfb, transparent), radial-gradient(9px 5px at 34px 58px, #e2efef, transparent), #fbfbfe;
    box-shadow: 0 10px 36px rgba(0, 0, 0, 0.1);
    color: #7e7e83;
}

.search-icon {
    flex: none;
    width: 28px;
    height: 28px;
}

.search input {
    flex: 1;
    min-width: 0;
    padding: 2px 15px 0;
    border: none;
    outline: none;
    background: none;
    font: inherit;
}

.search input::placeholder {
    color: #7e7e83;
}

.mic-icon {
    flex: none;
    width: 22px;
    height: 32px;
}

.scrollbar {
    position: absolute;
    right: 4px;
    z-index: 1;
    width: 5px;
    border-radius: 3px;
    background-color: #9b9ba0;
}

.scrollbar-settings {
    top: 283px;
    height: 421px;
}

.scrollbar-access {
    top: 289px;
    height: 370px;
}

.scrollbar-speech {
    top: 340px;
    height: 850px;
}

/* Orange markers drawn over the phones */
.ring {
    position: absolute;
    z-index: 3;
    height: 133px;
    border: 23px solid #ff9500;
    border-radius: 58px;
    pointer-events: none;
}

.ring-settings {
    top: 559px;
    left: -2px;
    width: 343px;
}

.ring-access {
    top: 646px;
    left: 0;
    width: 343px;
}

.ring-speech {
    top: 579px;
    left: -21px;
    width: 215px;
}

.ring-voices {
    top: 173px;
    left: -3px;
    right: -5px;
}
```
